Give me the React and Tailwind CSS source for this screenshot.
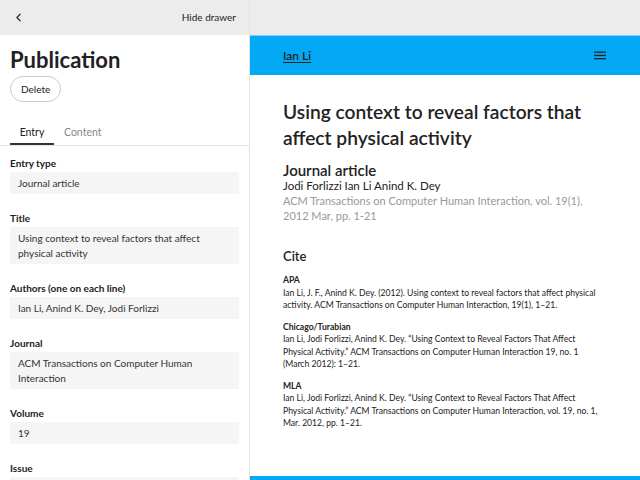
import React from 'react'
import { ChevronLeft } from 'lucide-react'

const fields = [
    { label: 'Entry type', value: 'Journal article' },
    { label: 'Title', value: 'Using context to reveal factors that affect physical activity' },
    { label: 'Authors (one on each line)', value: 'Ian Li, Anind K. Dey, Jodi Forlizzi' },
    { label: 'Journal', value: 'ACM Transactions on Computer Human Interaction' },
    { label: 'Volume', value: '19' },
    { label: 'Issue', value: '1' },
];

const cites = [
    {
        name: 'APA',
        text: 'Ian Li, J. F., Anind K. Dey. (2012). Using context to reveal factors that affect physical activity. ACM Transactions on Computer Human Interaction, 19(1), 1–21.',
    },
    {
        name: 'Chicago/Turabian',
        text: 'Ian Li, Jodi Forlizzi, Anind K. Dey. “Using Context to Reveal Factors That Affect Physical Activity.” ACM Transactions on Computer Human Interaction 19, no. 1 (March 2012): 1–21.',
    },
    {
        name: 'MLA',
        text: 'Ian Li, Jodi Forlizzi, Anind K. Dey. “Using Context to Reveal Factors That Affect Physical Activity.” ACM Transactions on Computer Human Interaction, vol. 19, no. 1, Mar. 2012, pp. 1–21.',
    },
];

const App = () => {
  return (
    <div className="flex h-[480px] w-[640px] overflow-hidden bg-white text-[#222] font-['Lato','Noto_Sans',sans-serif]">
        {/* drawer */}
        <aside className="flex w-[250px] shrink-0 flex-col border-r border-[#e2e2e2]">
            <div className="flex h-[35px] shrink-0 items-center justify-between bg-[#ececec] pl-[12px] pr-[13px]">
                <ChevronLeft size={13} strokeWidth={2.5} className="text-[#333]" />
                <span className="text-[10px]">Hide drawer</span>
            </div>
            <div className="px-[10px] pt-[11px]">
                <h1 className="text-[22px] font-bold leading-[28px]">Publication</h1>
                <button className="mt-[2px] rounded-full border border-[#ccc] px-[10px] py-[5px] text-[10px] leading-[14px]">
                    Delete
                </button>
            </div>
            <div className="mt-[23px] flex border-b border-[#e6e6e6] px-[10px] text-[10.5px] leading-[14px]">
                <div className="w-[44px] border-b-2 border-[#333] pb-[4px] text-center">Entry</div>
                <div className="ml-[10px] pb-[4px] text-[#888]">Content</div>
            </div>
            <div className="flex flex-col gap-[17px] px-[10px] pt-[10px]">
                {fields.map((f) => (
                    <div key={f.label}>
                        <div className="text-[10px] font-bold leading-[14px]">{f.label}</div>
                        <div className="mt-[2px] bg-[#f5f5f5] px-[8px] py-[3.5px] text-[10px] leading-[15px] text-[#333]">
                            {f.value}
                        </div>
                    </div>
                ))}
            </div>
        </aside>

        {/* preview */}
        <main className="flex min-w-0 flex-1 flex-col">
            <div className="h-[35px] shrink-0 bg-[#ececec]"></div>
            <div className="flex h-[40px] shrink-0 items-center justify-between border-t border-[#7fd3f9] bg-[#03a9f4] pl-[33px] pr-[34px]">
                <span className="text-[12px] font-semibold underline underline-offset-2">Ian Li</span>
                <svg width="12" height="9" viewBox="0 0 12 9" className="text-[#222]">
                    <rect x="0" y="0.5" width="12" height="1.3" fill="currentColor" />
                    <rect x="0" y="3.8" width="12" height="1.3" fill="currentColor" />
                    <rect x="0" y="7.1" width="12" height="1.3" fill="currentColor" />
                </svg>
            </div>
            <div className="min-h-0 flex-1 overflow-hidden pl-[33px] pr-[36px] pt-[24px]">
                <h2 className="mr-[-3px] text-[19.2px] font-semibold leading-[26px]">
                    Using context to reveal factors that affect physical activity
                </h2>
                <div className="mt-[12px] leading-[15px]">
                    <div className="text-[15px] font-semibold">Journal article</div>
                    <div className="text-[11.5px]">Jodi Forlizzi Ian Li Anind K. Dey</div>
                    <div className="text-[11px] text-[#999]">
                        ACM Transactions on Computer Human Interaction, vol. 19(1), 2012 Mar, pp. 1-21
                    </div>
                </div>
                <div className="mt-[24px] text-[13px] font-semibold leading-[18px]">Cite</div>
                <div className="mt-[9px] flex flex-col gap-[9px]">
                    {cites.map((c) => (
                        <div key={c.name} className="text-[8.6px] leading-[12.5px]">
                            <div className="font-bold">{c.name}</div>
                            <div>{c.text}</div>
                        </div>
                    ))}
                </div>
            </div>
            <div className="h-[4px] shrink-0 bg-[#03a9f4]"></div>
        </main>
    </div>
  );
}

export default App
